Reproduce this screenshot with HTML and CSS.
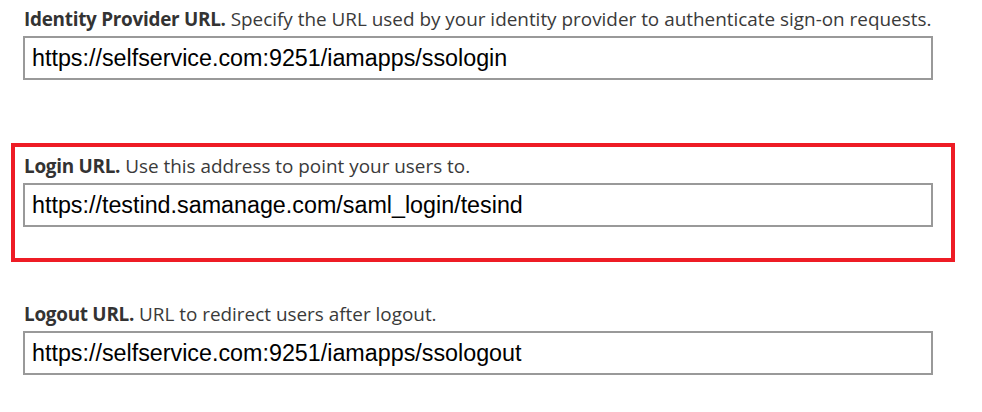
FILE: index.html
```html
<!DOCTYPE html>
<html>
<head>
<meta charset="utf-8">
<link rel="stylesheet" href="styles.css">
</head>
<body>
<div class="page">
  <div class="field first">
    <div class="label"><b>Identity Provider URL.</b> Specify the URL used by your identity provider to authenticate sign-on requests.</div>
    <div class="input">https://selfservice.com:9251/iamapps/ssologin</div>
  </div>
  <div class="highlight">
    <div class="field">
      <div class="label"><b>Login URL.</b> Use this address to point your users to.</div>
      <div class="input">https://testind.samanage.com/saml_login/tesind</div>
    </div>
  </div>
  <div class="field last">
    <div class="label"><b>Logout URL.</b> URL to redirect users after logout.</div>
    <div class="input">https://selfservice.com:9251/iamapps/ssologout</div>
  </div>
</div>
</body>
</html>
```
FILE: styles.css
```css
html, body { margin: 0; padding: 0; background: #fff; }
.page { display: flex; flex-direction: column; padding: 8px 0 0 23px; width: 910px; }
.label { font-family: "Open Sans", sans-serif; font-size: 18.9px; line-height: 22px; color: #3a3a3a; margin-left: 1px; white-space: nowrap; }
.label b { font-weight: 700; color: #333; letter-spacing: -0.27px; }
.input { box-sizing: border-box; height: 44px; border: 2px solid #999; margin-top: 6px; padding: 0 7px; font-family: "Liberation Sans", Arial, sans-serif; font-size: 23.3px; line-height: 40px; color: #000; }
.highlight { margin: 63px 0 0 -12px; border: 4px solid #ee1c25; padding: 8px 18px 31px 8px; width: 944px; box-sizing: border-box; }
.last { margin-top: 41px; }
```
